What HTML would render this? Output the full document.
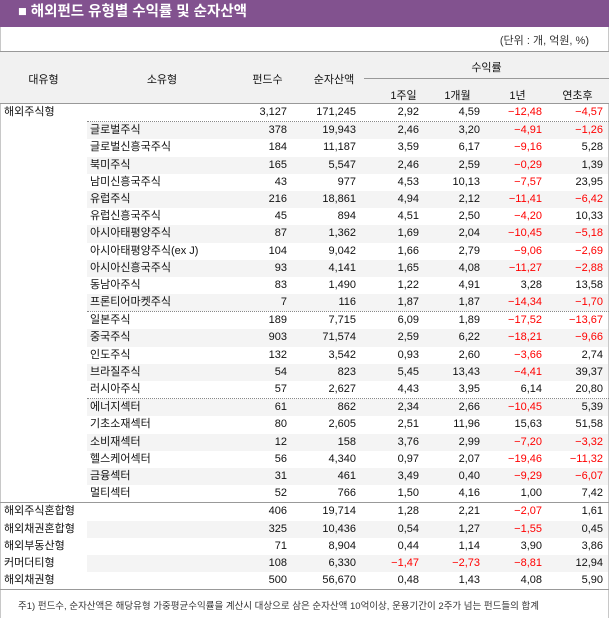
<!DOCTYPE html>
<html><head><meta charset="utf-8"><style>
*{margin:0;padding:0;box-sizing:border-box}
body{width:609px;height:618px;background:#fff;font-family:"Liberation Sans","Noto Sans CJK KR",sans-serif;font-size:11px;color:#111;position:relative;overflow:hidden}
.title{position:absolute;left:0;top:0;width:609px;height:27px;background:#82528f;color:#fff;font-weight:bold;font-size:14.5px;line-height:25px;padding-left:18px}
.frame{position:absolute;left:0;top:27px;width:609px;height:591px;border-left:1px solid #c8c8c8;border-right:1px solid #c8c8c8}
.unit{position:absolute;right:20px;top:32px;font-size:11px;color:#333}
.head{position:absolute;left:0;top:51px;width:609px;height:53px;background:#f1f1f1;border-top:1px solid #999;border-bottom:1px solid #999}
.head div{position:absolute;text-align:center}
.mid{position:absolute;left:364px;top:26px;width:245px;border-top:1px solid #999}
.rows{position:absolute;left:0;top:104px;width:609px}
.r{height:17.2px;line-height:17.2px;position:relative;white-space:nowrap}
.r.g::before{content:"";position:absolute;left:87px;right:1px;top:0;bottom:0;background:#f4f4f4}
.r span{position:absolute;top:0}
.a{left:4px}.b{left:90px}
.n1{right:322px}.n2{right:253px}.n3{right:190px}.n4{right:129px}.n5{right:67px}.n6{right:6px}
.red{color:#f00}
.foot{position:absolute;left:18px;top:598px;font-size:9.5px;color:#333}
</style></head><body>
<div class="title">■ 해외펀드 유형별 수익률 및 순자산액</div>
<div class="frame"></div>
<div class="unit">(단위 : 개, 억원, %)</div>
<div class="head">
<div style="left:0;width:87px;top:19px">대유형</div>
<div style="left:87px;width:150px;top:19px">소유형</div>
<div style="left:240px;width:55px;top:19px">펀드수</div>
<div style="left:300px;width:68px;top:19px">순자산액</div>
<div style="left:364px;width:245px;top:7px">수익률</div>
<div class="mid"></div>
<div style="left:376px;width:55px;top:35px">1주일</div>
<div style="left:430px;width:55px;top:35px">1개월</div>
<div style="left:490px;width:55px;top:35px">1년</div>
<div style="left:550px;width:55px;top:35px">연초후</div>
</div>
<div class="rows" id="rows"></div>
<div class="foot">주1) 펀드수, 순자산액은 해당유형 가중평균수익률을 계산시 대상으로 삼은 순자산액 10억이상, 운용기간이 2주가 넘는 펀드들의 합계</div>
<script>
var d=[
["해외주식형","","3,127","171,245","2,92","4,59","-12,48","-4,57"],
["","글로벌주식","378","19,943","2,46","3,20","-4,91","-1,26"],
["","글로벌신흥국주식","184","11,187","3,59","6,17","-9,16","5,28"],
["","북미주식","165","5,547","2,46","2,59","-0,29","1,39"],
["","남미신흥국주식","43","977","4,53","10,13","-7,57","23,95"],
["","유럽주식","216","18,861","4,94","2,12","-11,41","-6,42"],
["","유럽신흥국주식","45","894","4,51","2,50","-4,20","10,33"],
["","아시아태평양주식","87","1,362","1,69","2,04","-10,45","-5,18"],
["","아시아태평양주식(ex J)","104","9,042","1,66","2,79","-9,06","-2,69"],
["","아시아신흥국주식","93","4,141","1,65","4,08","-11,27","-2,88"],
["","동남아주식","83","1,490","1,22","4,91","3,28","13,58"],
["","프론티어마켓주식","7","116","1,87","1,87","-14,34","-1,70"],
["","일본주식","189","7,715","6,09","1,89","-17,52","-13,67"],
["","중국주식","903","71,574","2,59","6,22","-18,21","-9,66"],
["","인도주식","132","3,542","0,93","2,60","-3,66","2,74"],
["","브라질주식","54","823","5,45","13,43","-4,41","39,37"],
["","러시아주식","57","2,627","4,43","3,95","6,14","20,80"],
["","에너지섹터","61","862","2,34","2,66","-10,45","5,39"],
["","기초소재섹터","80","2,605","2,51","11,96","15,63","51,58"],
["","소비재섹터","12","158","3,76","2,99","-7,20","-3,32"],
["","헬스케어섹터","56","4,340","0,97","2,07","-19,46","-11,32"],
["","금융섹터","31","461","3,49","0,40","-9,29","-6,07"],
["","멀티섹터","52","766","1,50","4,16","1,00","7,42"],
["해외주식혼합형","","406","19,714","1,28","2,21","-2,07","1,61"],
["해외채권혼합형","","325","10,436","0,54","1,27","-1,55","0,45"],
["해외부동산형","","71","8,904","0,44","1,14","3,90","3,86"],
["커머더티형","","108","6,330","-1,47","-2,73","-8,81","12,94"],
["해외채권형","","500","56,670","0,48","1,43","4,08","5,90"]];
var gray=[1,3,5,7,9,11,13,15,17,19,21,24,26];
var h="";
d.forEach(function(r,i){
 var c="r"+(gray.indexOf(i)>=0?" g":"");
 h+='<div class="'+c+'"><span class="a">'+r[0]+'</span><span class="b">'+r[1]+'</span>';
 var cl=["n1","n2","n3","n4","n5","n6"];
 for(var k=2;k<8;k++){h+='<span class="'+cl[k-2]+(r[k][0]=="-"?" red":"")+'">'+r[k].replace("-","−")+'</span>';}
 h+='</div>';
 if(i==0||i==11||i==16) h+='<div style="height:0;margin-left:87px;border-top:1px dotted #888;position:relative;z-index:1"></div>';
 if(i==22||i==27) h+='<div style="height:0;border-top:1px solid #999;position:relative;z-index:1"></div>';
});
document.getElementById("rows").innerHTML=h;
</script>
</body></html>
